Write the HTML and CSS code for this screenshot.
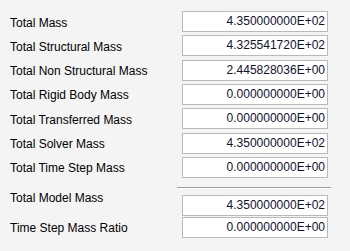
FILE: index.html
```html
<!DOCTYPE html>
<html>
<head>
<meta charset="utf-8">
<link rel="stylesheet" href="styles.css">
</head>
<body>
<div class="panel">
  <div class="group">
    <div class="row"><span class="label">Total Mass</span><div class="field">4.350000000E+02</div></div>
    <div class="row"><span class="label">Total Structural Mass</span><div class="field">4.325541720E+02</div></div>
    <div class="row"><span class="label">Total Non Structural Mass</span><div class="field">2.445828036E+00</div></div>
    <div class="row"><span class="label">Total Rigid Body Mass</span><div class="field">0.000000000E+00</div></div>
    <div class="row"><span class="label">Total Transferred Mass</span><div class="field">0.000000000E+00</div></div>
    <div class="row"><span class="label">Total Solver Mass</span><div class="field">4.350000000E+02</div></div>
    <div class="row"><span class="label">Total Time Step Mass</span><div class="field">0.000000000E+00</div></div>
  </div>
  <div class="separator"></div>
  <div class="group tight">
    <div class="row"><span class="label raised">Total Model Mass</span><div class="field">4.350000000E+02</div></div>
    <div class="row"><span class="label">Time Step Mass Ratio</span><div class="field">0.000000000E+00</div></div>
  </div>
</div>
</body>
</html>
```
FILE: styles.css
```css
html, body {
  margin: 0;
  padding: 0;
  background: #f4f4f4;
}
body {
  width: 350px;
  height: 251px;
  overflow: hidden;
  font-family: "Liberation Sans", Arial, sans-serif;
  font-size: 12px;
  color: #000;
}
.panel {
  padding-top: 11px;
}
.group {
  display: flex;
  flex-direction: column;
  gap: 3.34px;
}
.group.tight {
  gap: 1px;
}
.row {
  display: flex;
  align-items: center;
  height: 21px;
}
.label {
  width: 172px;
  padding-left: 10px;
  position: relative;
  top: 1px;
}
.label.raised {
  top: -7px;
}
.field {
  box-sizing: border-box;
  width: 146px;
  height: 21px;
  background: #fff;
  border: 1px solid #b9b9b9;
  text-align: right;
  padding-right: 2px;
  line-height: 19px;
  color: #101030;
}
.separator {
  margin: 9px 0 6px 177px;
  width: 154px;
  height: 0;
  border-top: 1px solid #a0a0a0;
  border-bottom: 1px solid #ffffff;
}
```
